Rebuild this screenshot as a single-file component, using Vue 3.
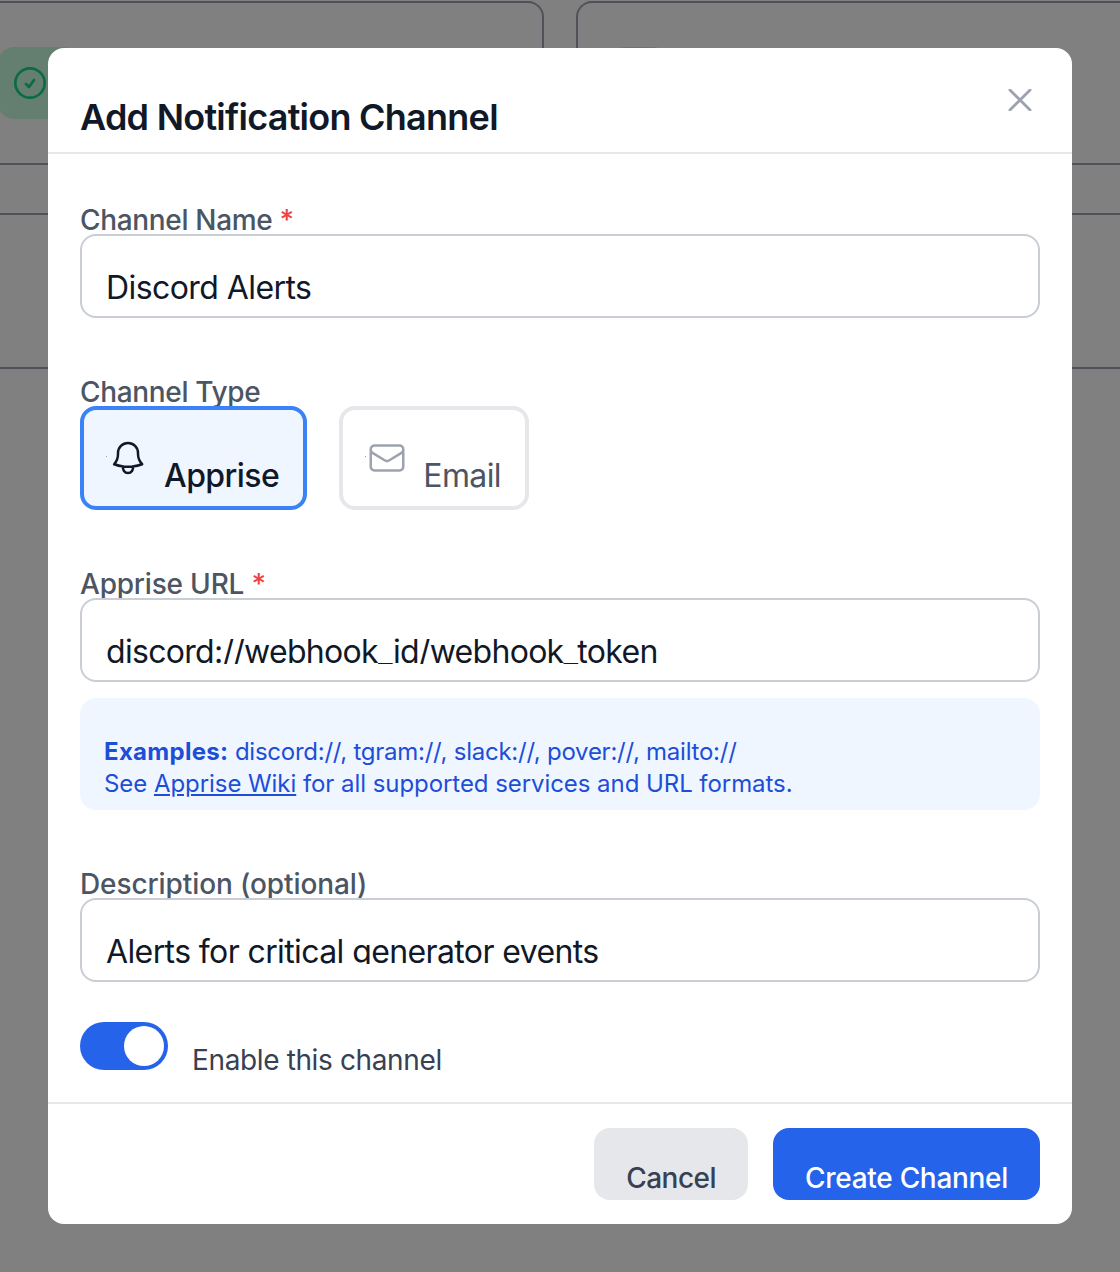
<script setup>
const channelName = 'Discord Alerts'
const url = 'discord://webhook_id/webhook_token'
const description = 'Alerts for critical generator events'
</script>

<template>
  <div class="page">
    <div class="backdrop">
      <div class="cards">
        <div class="card left">
          <div class="status">
            <svg class="check" viewBox="0 0 24 24" fill="none" stroke="currentColor" stroke-width="2" stroke-linecap="round" stroke-linejoin="round">
              <circle cx="12" cy="12" r="11" />
              <path d="M9 12.75l2.25 2.25L15 9.75" />
            </svg>
          </div>
          <div class="rule r1"></div>
          <div class="rule r2"></div>
          <div class="rule r3"></div>
        </div>
        <div class="card right">
          <div class="status-alt"></div>
          <div class="rule r1"></div>
          <div class="rule r2"></div>
          <div class="rule r3"></div>
        </div>
      </div>
    </div>

    <div class="modal">
      <header class="head">
        <h2>Add Notification Channel</h2>
        <button class="close" aria-label="Close">
          <svg viewBox="0 0 24 24" fill="none" stroke="currentColor" stroke-width="3" stroke-linecap="round">
            <path d="M1 1l22 22M23 1L1 23" />
          </svg>
        </button>
      </header>

      <div class="body">
        <div class="field f-name">
          <label class="l-name">Channel Name <span class="req">*</span></label>
          <div class="input" role="textbox"><div class="value v-name">{{ channelName }}</div></div>
        </div>

        <div class="field f-type">
          <label class="l-name">Channel Type</label>
          <div class="types">
            <div class="type active">
              <span class="dot"></span>
              <svg class="bell" viewBox="0 0 24 24" fill="none" stroke="currentColor" stroke-width="1.5" stroke-linecap="round" stroke-linejoin="round">
                <path d="M14.86 17.08a23.85 23.85 0 0 0 5.64-1.35A9 9 0 0 1 18 9.75V9A6 6 0 0 0 6 9v.75a9 9 0 0 1-2.31 5.98 23.85 23.85 0 0 0 5.45 1.35m5.72 0a24.26 24.26 0 0 1-5.72 0m5.72 0a3 3 0 1 1-5.72 0" />
              </svg>
              <span class="type-label">Apprise</span>
            </div>
            <div class="type">
              <span class="dot"></span>
              <svg class="mail" viewBox="0 0 24 24" fill="none" stroke="currentColor" stroke-width="1.5" stroke-linecap="round" stroke-linejoin="round">
                <path d="M21.75 6.75v10.5a2.25 2.25 0 0 1-2.25 2.25h-15a2.25 2.25 0 0 1-2.25-2.25V6.75m19.5 0A2.25 2.25 0 0 0 19.5 4.5h-15a2.25 2.25 0 0 0-2.25 2.25m19.5 0v.24a2.25 2.25 0 0 1-1.07 1.92l-7.5 4.61a2.25 2.25 0 0 1-2.36 0L3.32 8.91a2.25 2.25 0 0 1-1.07-1.92V6.75" />
              </svg>
              <span class="type-label">Email</span>
            </div>
          </div>
        </div>

        <div class="field f-url">
          <label class="l-url">Apprise URL <span class="req">*</span></label>
          <div class="input" role="textbox"><div class="value v-url">{{ url }}</div></div>
          <div class="hint">
            <p class="line-a"><strong>Examples:</strong> discord://, tgram://, slack://, pover://, mailto://</p>
            <p class="line-b">See <a href="#">Apprise Wiki</a> for all supported services and URL formats.</p>
          </div>
        </div>

        <div class="field f-desc">
          <label class="l-desc">Description (optional)</label>
          <div class="input" role="textbox"><div class="value v-desc">{{ description }}</div></div>
        </div>

        <div class="enable">
          <div class="toggle"><span class="knob"></span></div>
          <span class="enable-label">Enable this channel</span>
        </div>
      </div>

      <footer class="foot">
        <button class="btn cancel">Cancel</button>
        <button class="btn create">Create Channel</button>
      </footer>
    </div>
  </div>
</template>

<style>
html, body { margin: 0; background: #808080; }
</style>

<style scoped>
.page {
  position: relative;
  width: 1120px;
  height: 1272px;
  overflow: hidden;
  background: #808080;
  font-family: Inter, "Liberation Sans", sans-serif;
}
.backdrop { position: absolute; inset: 0; }
.cards { display: grid; grid-template-columns: 544px 1fr; column-gap: 32px; }
.card {
  position: relative;
  height: 368px;
  box-sizing: border-box;
  border: 2px solid #4f5359;
  border-bottom: 0;
  border-radius: 16px 16px 0 0;
  margin-top: 1px;
}
.card.left { border-left: 0; border-top-left-radius: 0; }
.card.right { border-right: 0; border-top-right-radius: 0; }
.rule { position: absolute; left: 0; right: 0; height: 2px; background: #4f5359; }
.r1 { top: 160px; }
.r2 { top: 210px; }
.r3 { top: 364px; }
.status {
  position: absolute;
  left: -2px;
  top: 44px;
  width: 80px;
  height: 72px;
  border-radius: 16px;
  background: #647f70;
  color: #0b6b47;
}
.status-alt {
  position: absolute;
  left: 38px;
  top: 44px;
  width: 46px;
  height: 72px;
  border-radius: 8px;
  background: #746f85;
}
.check { position: absolute; left: 16px; top: 20px; width: 32px; height: 32px; }

.modal {
  position: absolute;
  left: 48px;
  top: 48px;
  width: 1024px;
  height: 1176px;
  background: #fff;
  border-radius: 16px;
  display: flex;
  flex-direction: column;
}
.head {
  position: relative;
  height: 106px;
  flex: none;
  box-sizing: border-box;
  border-bottom: 2px solid #e5e7eb;
  padding: 49px 32px 0;
}
h2 {
  margin: 0;
  font-size: 36px;
  line-height: 40px;
  font-weight: 600;
  letter-spacing: -0.75px;
  color: #111827;
}
.close {
  position: absolute;
  right: 40px;
  top: 41px;
  width: 24px;
  height: 22px;
  padding: 0;
  border: 0;
  background: none;
  color: #9ca3af;
}
.close svg { display: block; width: 24px; height: 22px; }

.body { flex: 1; padding: 0 32px; display: flex; flex-direction: column; }
.field { display: flex; flex-direction: column; }
.f-name { margin-top: 48px; }
.f-type { margin-top: 56px; }
.f-url { margin-top: 56px; }
.f-desc { margin-top: 56px; }
label {
  display: block;
  height: 32px;
  overflow: hidden;
  font-size: 28px;
  line-height: 36px;
  font-weight: 500;
  color: #4b5563;
}
.l-name { letter-spacing: -0.33px; }
.l-url { letter-spacing: -0.2px; }
.l-desc { letter-spacing: -0.1px; }
.req { color: #ef4444; }
.input {
  box-sizing: border-box;
  width: 960px;
  height: 84px;
  padding: 30px 24px 0;
  border: 2px solid #c9cdd4;
  border-radius: 16px;
  background: #fff;
}
.value {
  height: 34px;
  overflow: hidden;
  white-space: nowrap;
  font-size: 32px;
  line-height: 44px;
  color: #111827;
}
.v-name { letter-spacing: -0.57px; }
.v-url { letter-spacing: -0.7px; }
.v-desc { letter-spacing: -0.61px; }
.types { display: flex; gap: 32px; }
.type {
  box-sizing: border-box;
  height: 104px;
  border: 4px solid #e5e7eb;
  border-radius: 16px;
  background: #fff;
  color: #4b5563;
  padding: 0 24px;
  display: flex;
  position: relative;
  font-size: 32px;
  letter-spacing: -0.6px;
}
.type.active {
  border-color: #3b82f6;
  background: #eff6ff;
  color: #111827;
  font-weight: 500;
  letter-spacing: -0.55px;
}
.dot { position: absolute; left: 22px; top: 46px; width: 1px; height: 1px; background: #9ca3af; }
.bell, .mail { width: 40px; height: 40px; margin-top: 28px; flex: none; }
.bell { color: #111827; }
.mail { color: #9ca3af; }
.type-label { margin-left: 16px; line-height: 40px; margin-top: 46px; }
.hint {
  margin-top: 16px;
  height: 112px;
  box-sizing: border-box;
  padding: 38px 24px 0;
  border-radius: 16px;
  background: #eff6ff;
  color: #1d4ed8;
  font-size: 24px;
  line-height: 32px;
}
.hint p { margin: 0; white-space: nowrap; }
.line-a { letter-spacing: -0.25px; }
.line-b { letter-spacing: -0.06px; }
.hint strong { font-weight: 700; letter-spacing: 0.3px; }
.hint a { color: #1d4ed8; text-decoration: underline; }
.enable { display: flex; margin-top: 40px; align-items: flex-start; }
.toggle {
  position: relative;
  width: 88px;
  height: 48px;
  border-radius: 24px;
  background: #2563eb;
}
.knob {
  position: absolute;
  right: 4px;
  top: 4px;
  width: 40px;
  height: 40px;
  border-radius: 50%;
  background: #fff;
}
.enable-label {
  margin-left: 24px;
  margin-top: 20px;
  font-size: 28px;
  line-height: 36px;
  letter-spacing: -0.37px;
  color: #374151;
}
.foot {
  flex: none;
  height: 122px;
  box-sizing: border-box;
  border-top: 2px solid #e5e7eb;
  padding: 24px 32px 0;
  display: flex;
  justify-content: flex-end;
  gap: 25px;
}
.btn {
  height: 72px;
  border: 0;
  border-radius: 16px;
  padding: 28px 32px 0;
  font: 500 28px/32px Inter, "Liberation Sans", sans-serif;
}
.cancel { background: #e5e7eb; color: #374151; letter-spacing: -0.5px; }
.create { background: #2563eb; color: #fff; letter-spacing: -0.3px; }
</style>
